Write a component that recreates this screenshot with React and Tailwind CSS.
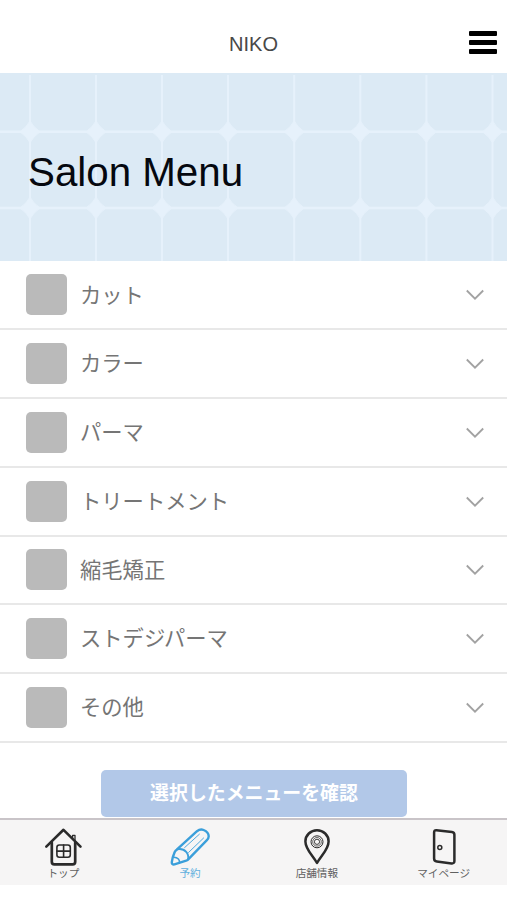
import React from 'react';

const menus = ['カット', 'カラー', 'パーマ', 'トリートメント', '縮毛矯正', 'ストデジパーマ', 'その他'];

const tileColumns = [30, 96, 162, 228, 294.2, 360.3, 426.4, 492.5];
const tileRows = [58.8, 135];

// --- Tab Bar Icons ---
const HomeIcon = () => (
  <svg viewBox="0 0 40 40" className="w-10 h-10" fill="none" stroke="#2b2b2b" strokeLinecap="round" strokeLinejoin="round">
    <path d="M3.3 19.6 20.5 2.8l17 16.8" strokeWidth="2.6" />
    <path d="M8.8 15.5v19.3q0 2.6 2.6 2.6h18.2q2.6 0 2.6-2.6V15.5" strokeWidth="2.7" />
    <path d="M29.6 10.8V8.4h2.4v5" strokeWidth="1.3" />
    <rect x="13.9" y="18" width="13.4" height="12.2" rx="2.4" strokeWidth="1.6" />
    <path d="M20.6 18v12.2M13.9 24.1h13.4" strokeWidth="1.6" />
  </svg>
);

const PencilIcon = () => (
  <svg viewBox="0 0 40 40" className="w-10 h-10" fill="none" stroke="#3b9fda" strokeLinecap="round" strokeLinejoin="round">
    <path d="M7 22.4 27 4.2q3.2-2.5 6.6-1.2 5 2 5.1 6.2-.1 2.3-1.8 4L18 32.6q-1.2.9-2.6 1.3L4.5 37.4q-2.8.6-2.7-2.2.7-5 2.8-9.9.7-1.7 2.4-2.9z" strokeWidth="2.4" />
    <path d="M7 22.4q5.8-1.3 9.2 2.5 2.9 3.4 1.8 7.7" strokeWidth="1.9" />
    <path d="M3.8 30.2q3 .1 4.6 1.8 1.3 1.5 1.1 3.4" strokeWidth="1.6" />
    <path d="M14.6 20.6 29.4 7.2M18.6 25.4 33.6 11" strokeWidth=".9" />
  </svg>
);

const PinIcon = () => (
  <svg viewBox="0 0 40 40" className="w-10 h-10" fill="none" stroke="#2b2b2b" strokeLinejoin="round">
    <path d="M20 36C16.4 29 8.4 22.6 8.4 14.4a11.6 11.2 0 0 1 23.2 0C31.6 22.6 23.6 29 20 36z" strokeWidth="2.5" />
    <circle cx="20" cy="14.8" r="6" strokeWidth="1" />
    <circle cx="20" cy="14.8" r="4.3" strokeWidth=".7" />
    <circle cx="20" cy="14.8" r="2.6" strokeWidth=".9" />
  </svg>
);

const DoorIcon = () => (
  <svg viewBox="0 0 40 40" className="w-10 h-10" fill="none" stroke="#2b2b2b" strokeLinejoin="round">
    <path d="M12.4 3.2 28 5q2.4.3 2.4 2.7v26.2q0 2.8-2.8 2.5l-14.8-1.9q-2.7-.4-2.7-3V5.6q0-2.6 2.3-2.4z" strokeWidth="2.5" />
    <circle cx="15.8" cy="20.5" r="2" strokeWidth="1.5" />
  </svg>
);

const tabs = [
  { label: 'トップ', Icon: HomeIcon },
  { label: '予約', Icon: PencilIcon, active: true },
  { label: '店舗情報', Icon: PinIcon },
  { label: 'マイページ', Icon: DoorIcon },
];

// --- Header ---
const Header = () => (
  <header className="grid grid-cols-[1fr_auto_1fr] items-center h-[73px] pt-[12px] pr-[10px]">
    <h1 className="col-start-2 pl-[10px] pt-[2px] text-[20px] leading-none text-[#484848]">NIKO</h1>
    <button aria-label="menu" className="justify-self-end flex flex-col gap-1">
      <span className="w-7 h-[5px] rounded-[1px] bg-black" />
      <span className="w-7 h-[5px] rounded-[1px] bg-black" />
      <span className="w-7 h-[5px] rounded-[1px] bg-black" />
    </button>
  </header>
);

// --- Tiled Banner ---
const Banner = () => (
  <div className="relative flex items-center h-[188px] bg-[#dceaf5] overflow-hidden">
    <svg viewBox="0 0 507 188" className="absolute inset-0 w-full h-full" stroke="#e6f1fb" fill="#e6f1fb">
      {tileColumns.map(x => <path key={x} d={`M${x} 2V188`} strokeWidth="2" />)}
      {tileRows.map(y => <path key={y} d={`M0 ${y}H507`} strokeWidth="2.6" />)}
      {tileRows.map(y => tileColumns.map(x => (
        <path key={`${x}-${y}`} d={`M${x} ${y - 11}q3 6 10 11q-7 5-10 11q-3-6-10-11q7-5 10-11z`} strokeWidth="1" />
      )))}
    </svg>
    <h2 className="relative pl-[28px] pt-[13px] text-[40.3px] leading-none text-[#05080f]">Salon Menu</h2>
  </div>
);

// --- Menu Row ---
const MenuRow = ({ name }) => (
  <li className="flex items-center h-[68.75px] pl-[26px] pr-[23px] border-b-2 border-[#e8e8e8]">
    <span className="w-[41px] h-[41px] rounded-[5px] bg-[#bababa]" />
    <span className="ml-[13px] pt-[3px] flex-1 text-[21.3px] leading-none text-[#757575]">{name}</span>
    <svg viewBox="0 0 18 12" className="w-[18px] h-3 mt-px" fill="none" stroke="#a2a2a2" strokeWidth="1.8">
      <path d="M.8 1.5 9 9.7l8.2-8.2" />
    </svg>
  </li>
);

// --- Tab Bar ---
const TabBar = () => (
  <nav className="grid grid-cols-4 h-[67px] bg-[#f6f5f5] border-t-2 border-[#c9c4c8]">
    {tabs.map(({ label, Icon, active }) => (
      <a key={label} className={`flex flex-col items-center pt-[7px] ${active ? 'text-[#62b0de]' : 'text-[#606060]'}`}>
        <Icon />
        <span className="mt-px text-[10.6px] leading-none">{label}</span>
      </a>
    ))}
  </nav>
);

export default function App() {
  return (
    <div className="flex flex-col w-[507px] h-[900px] bg-white overflow-hidden font-['Liberation_Sans','Noto_Sans_CJK_JP',sans-serif]">
      <Header />
      <Banner />
      <ul className="pt-[0.5px]">
        {menus.map(name => <MenuRow key={name} name={name} />)}
      </ul>
      <div className="flex-1 flex items-start justify-center pt-[27px]">
        <button className="w-[306px] h-[47px] ml-px pt-[2px] rounded-[5px] bg-[#b2c8e8] text-white text-[18.9px] leading-none font-bold whitespace-nowrap">
          選択したメニューを確認
        </button>
      </div>
      <TabBar />
      <div className="h-[15px]" />
    </div>
  );
}
